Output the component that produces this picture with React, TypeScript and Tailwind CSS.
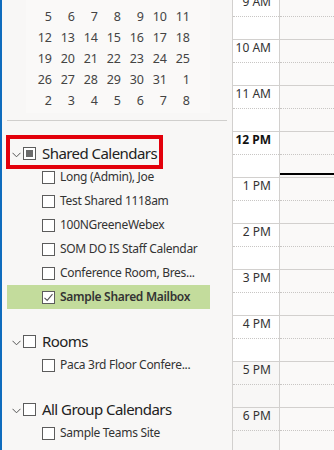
import React from "react";

const weeks = [
  ["5", "6", "7", "8", "9", "10", "11"],
  ["12", "13", "14", "15", "16", "17", "18"],
  ["19", "20", "21", "22", "23", "24", "25"],
  ["26", "27", "28", "29", "30", "31", "1"],
  ["2", "3", "4", "5", "6", "7", "8"],
];

const hours = ["9 AM", "10 AM", "11 AM", "12 PM", "1 PM", "2 PM", "3 PM", "4 PM", "5 PM", "6 PM"];

type Item = { name: string; checked?: boolean };

const groups: { title: string; mixed?: boolean; marked?: boolean; items: Item[] }[] = [
  {
    title: "Shared Calendars",
    mixed: true,
    marked: true,
    items: [
      { name: "Long (Admin), Joe" },
      { name: "Test Shared 1118am" },
      { name: "100NGreeneWebex" },
      { name: "SOM DO IS Staff Calendar" },
      { name: "Conference Room, Bres..." },
      { name: "Sample Shared Mailbox", checked: true },
    ],
  },
  { title: "Rooms", items: [{ name: "Paca 3rd Floor Confere..." }] },
  { title: "All Group Calendars", items: [{ name: "Sample Teams Site" }] },
];

function Chevron() {
  return (
    <svg width="9" height="6" viewBox="0 0 9 6" className="shrink-0 mt-[3px]">
      <polyline points="0.5,0.8 4.5,4.8 8.5,0.8" fill="none" stroke="#555" strokeWidth="1" />
    </svg>
  );
}

function Box({ checked, mixed }: { checked?: boolean; mixed?: boolean }) {
  return (
    <div className="w-[13px] h-[13px] shrink-0 border border-[#5c5c5c] bg-white flex items-center justify-center">
      {mixed && <div className="w-[7px] h-[7px] bg-[#6b6b6b]" />}
      {checked && (
        <svg width="11" height="11" viewBox="0 0 11 11">
          <polyline points="1.5,5.8 4.2,8.4 9.5,2.2" fill="none" stroke="#555" strokeWidth="1.1" />
        </svg>
      )}
    </div>
  );
}

export default function App() {
  return (
    <div
      className="w-[334px] h-[450px] overflow-hidden flex bg-[#f8f7f6] text-[#262626]"
      style={{ fontFamily: '"Segoe UI", "Noto Sans", "Open Sans", sans-serif' }}
    >
      {/* folder pane */}
      <div className="w-[233px] shrink-0 border-l-2 border-[#0f6cbd] border-r border-r-[#d2d0ce] flex flex-col">
        <div className="ml-[24px] w-[184px] pt-[7px] pb-[1px] bg-[#faf9f8]">
          {weeks.map((w, i) => (
            <div key={i} className="grid grid-cols-[repeat(7,23px)] h-[21px] items-center pl-[3px]">
              {w.map((d, j) => (
                <div key={j} className="text-right text-[12.5px] leading-none text-[#444]">
                  {d}
                </div>
              ))}
            </div>
          ))}
        </div>
        <div className="ml-[5px] mt-[7px] w-[220px] h-px bg-[#d0cfcd]" />

        <div className="mt-[20px] flex flex-col gap-[20px]">
          {groups.map((g) => (
            <div key={g.title}>
              <div className="relative h-[24px] flex items-center pl-[10px]">
                {g.marked && (
                  <div className="absolute left-[4px] top-[-6px] w-[157px] h-[34px] border-4 border-[#e3000b]" />
                )}
                <Chevron />
                <div className="ml-[2px]">
                  <Box mixed={g.mixed} />
                </div>
                <span className="ml-[6px] text-[15px] tracking-[-0.55px] leading-none text-[#222] whitespace-nowrap">
                  {g.title}
                </span>
              </div>
              {g.items.map((it) => (
                <div
                  key={it.name}
                  className={`h-[24px] flex items-center ml-[5px] w-[203px] pl-[35px] ${
                    it.checked ? "bg-[#c3dc9c]" : ""
                  }`}
                >
                  <Box checked={it.checked} />
                  <span
                    className={`ml-[5px] text-[12px] tracking-[-0.3px] leading-none whitespace-nowrap ${
                      it.checked ? "font-semibold text-[#333]" : "text-[#333]"
                    }`}
                  >
                    {it.name}
                  </span>
                </div>
              ))}
            </div>
          ))}
        </div>
      </div>

      {/* day view */}
      <div className="flex-1 flex flex-col mt-[-7px]">
        {hours.map((h, i) => {
          const work = i < 8;
          return (
            <div key={h} className="h-[46px] shrink-0 flex border-t border-[#d2d0ce]">
              <div className={`w-[47px] shrink-0 border-r border-[#d2d0ce] ${work ? "bg-white" : "bg-[#f8f7f6]"}`}>
                <div className="h-[22px] pr-[8px] text-right text-[12px] leading-[16px] text-[#333]">
                  <span className={h === "12 PM" ? "font-bold text-[#111]" : ""}>{h}</span>
                </div>
                <div className="border-t border-dotted border-[#c8c6c4]" />
              </div>
              <div className="relative flex-1 bg-[#faf9f8]">
                <div className="h-[22px]" />
                <div className="border-t border-dotted border-[#c8c6c4]" />
                {h === "12 PM" && <div className="absolute left-0 right-0 top-[41px] h-[2px] bg-black" />}
              </div>
            </div>
          );
        })}
      </div>
    </div>
  );
}
